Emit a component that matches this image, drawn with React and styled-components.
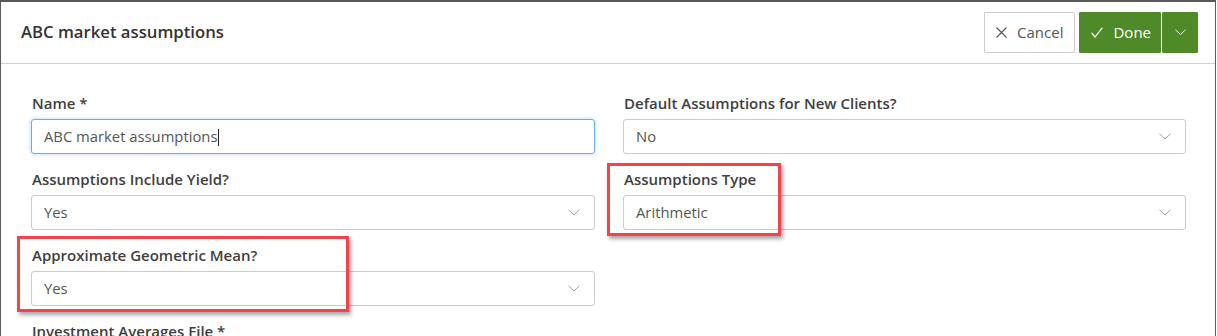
import React from "react";
import styled, { createGlobalStyle } from "styled-components";

const GlobalStyle = createGlobalStyle`
  html, body {
    margin: 0;
    background: #fff;
  }
  body {
    font-family: "Open Sans", "Noto Sans", sans-serif;
    color: #333;
  }
`;

const Modal = styled.div`
  width: 1216px;
  height: 336px;
  overflow: hidden;
  border: 1px solid #5a5a5a;
  border-bottom: none;
  border-top-width: 2px;
  box-sizing: border-box;
  background: #fff;
`;

const Header = styled.div`
  height: 61px;
  border-bottom: 1px solid #d2d2d2;
  display: flex;
  align-items: center;
  justify-content: space-between;
  padding: 0 17px 0 20px;
`;

const Title = styled.h1`
  margin: 0;
  font-size: 16.7px;
  font-weight: 600;
  color: #333;
  padding-bottom: 3px;
`;

const Actions = styled.div`
  display: flex;
  align-items: center;
  gap: 4px;
  margin-top: -1px;
`;

const Button = styled.button`
  height: 41px;
  display: flex;
  align-items: center;
  gap: 10px;
  font-family: "Open Sans", "Noto Sans", sans-serif;
  font-size: 15px;
  border-radius: 1px;
  cursor: pointer;
  padding: ${(p) => (p.$primary ? "0 9px 0 11px" : "0 11px")};
  background: ${(p) => (p.$primary ? "#4e8a27" : "#fff")};
  color: ${(p) => (p.$primary ? "#fff" : "#555")};
  border: 1px solid ${(p) => (p.$primary ? "#4e8a27" : "#ccc")};
`;

const SplitGroup = styled.div`
  display: flex;
  gap: 1px;
`;

const CaretButton = styled(Button)`
  width: 36px;
  justify-content: center;
  padding: 0;
`;

const Body = styled.div`
  padding: 29px 28px 0 30px;
  display: grid;
  grid-template-columns: 564px 563px;
  column-gap: 28px;
  row-gap: 15px;
`;

const Field = styled.div`
  position: relative;
  display: flex;
  flex-direction: column;
  gap: 6px;
`;

const Label = styled.label`
  font-size: 15px;
  font-weight: 600;
  color: #404040;
  line-height: 20px;
  padding-left: 1px;
`;

const Control = styled.div`
  height: 35px;
  box-sizing: border-box;
  border: 1px solid ${(p) => (p.$focused ? "#66afe9" : "#ccc")};
  box-shadow: ${(p) => (p.$focused ? "0 0 4px rgba(102, 175, 233, 0.5)" : "none")};
  border-radius: 3px;
  display: flex;
  align-items: center;
  justify-content: space-between;
  padding: 0 14px 1px 12px;
  font-size: 14.8px;
  color: #555;
`;

const Caret = styled.span`
  display: inline-block;
  width: 1px;
  height: 17px;
  background: #222;
  vertical-align: middle;
  margin-left: 1px;
`;

const Highlight = styled.div`
  position: absolute;
  left: ${(p) => p.$left}px;
  top: ${(p) => p.$top}px;
  width: ${(p) => p.$width}px;
  height: ${(p) => p.$height}px;
  border: 3px solid #f2454a;
  box-sizing: border-box;
  box-shadow: 2px 3px 4px rgba(0, 0, 0, 0.35);
  pointer-events: none;
`;

const Chevron = ({ color = "#a0a0a0", size = 12 }) => (
  <svg width={size} height={size / 2 + 1} viewBox="0 0 12 7" fill="none">
    <path d="M0.5 0.8 L6 6 L11.5 0.8" stroke={color} strokeWidth="1" />
  </svg>
);

const Select = ({ value }) => (
  <Control>
    <span>{value}</span>
    <Chevron />
  </Control>
);

export default function App() {
  return (
    <>
      <GlobalStyle />
      <Modal>
        <Header>
          <Title>ABC market assumptions</Title>
          <Actions>
            <Button>
              <svg width="11" height="11" viewBox="0 0 11 11">
                <path d="M0.5 0.5 L10.5 10.5 M10.5 0.5 L0.5 10.5" stroke="#555" strokeWidth="1.1" />
              </svg>
              Cancel
            </Button>
            <SplitGroup>
              <Button $primary>
                <svg width="12" height="11" viewBox="0 0 12 11">
                  <path d="M0.6 5.8 L4 10 L11.4 0.6" stroke="#fff" strokeWidth="1.2" fill="none" />
                </svg>
                Done
              </Button>
              <CaretButton $primary>
                <Chevron color="#fff" size={11} />
              </CaretButton>
            </SplitGroup>
          </Actions>
        </Header>
        <Body>
          <Field>
            <Label>Name *</Label>
            <Control $focused>
              <span>
                ABC market assumptions
                <Caret />
              </span>
            </Control>
          </Field>
          <Field>
            <Label>Default Assumptions for New Clients?</Label>
            <Select value="No" />
          </Field>
          <Field>
            <Label>Assumptions Include Yield?</Label>
            <Select value="Yes" />
          </Field>
          <Field>
            <Label>Assumptions Type</Label>
            <Select value="Arithmetic" />
            <Highlight $left={-16} $top={-6} $width={174} $height={73} />
          </Field>
          <Field>
            <Label>Approximate Geometric Mean?</Label>
            <Select value="Yes" />
            <Highlight $left={-14} $top={-9} $width={332} $height={76} />
          </Field>
          <div />
          <Field>
            <Label>Investment Averages File *</Label>
            <Select value="" />
          </Field>
        </Body>
      </Modal>
    </>
  );
}
